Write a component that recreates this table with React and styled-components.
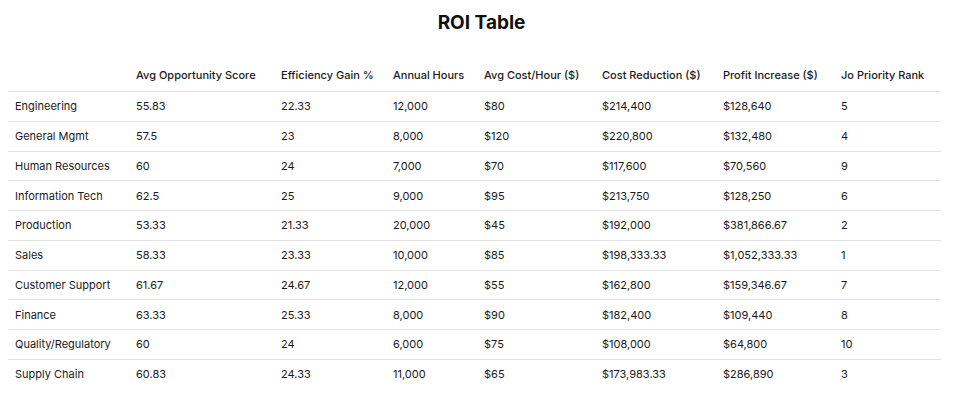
import styled, { createGlobalStyle } from "styled-components";

const GlobalStyle = createGlobalStyle`
  body {
    margin: 0;
    background: #ffffff;
    font-family: Inter, "Liberation Sans", Arial, sans-serif;
    color: #1a1a1a;
  }
`;

const Page = styled.div`
  width: 955px;
  padding: 10px 14px 0 8px;
  box-sizing: border-box;
`;

const Title = styled.h2`
  margin: 0 0 22px;
  text-align: center;
  font-size: 19px;
  font-weight: 700;
  line-height: 26px;
  color: #111;
  padding-left: 14px;
`;

const Table = styled.table`
  width: 933px;
  border-collapse: collapse;
  table-layout: fixed;
  font-size: 11px;
`;

const HeadCell = styled.th`
  text-align: left;
  font-weight: 500;
  padding: 0 7px;
  height: 33px;
  vertical-align: middle;
  border-bottom: 1px solid #e3e3e3;
  white-space: nowrap;
`;

const Row = styled.tr`
  border-bottom: ${(p) => (p.$last ? "none" : "1px solid #e3e3e3")};
`;

const Cell = styled.td`
  padding: 0 7px;
  height: 28.75px;
  vertical-align: middle;
  white-space: nowrap;
`;

const widths = [121, 145, 112, 91, 118, 121, 118, 107];

const headers = [
  "",
  "Avg Opportunity Score",
  "Efficiency Gain %",
  "Annual Hours",
  "Avg Cost/Hour ($)",
  "Cost Reduction ($)",
  "Profit Increase ($)",
  "Jo Priority Rank",
];

const rows = [
  ["Engineering", "55.83", "22.33", "12,000", "$80", "$214,400", "$128,640", "5"],
  ["General Mgmt", "57.5", "23", "8,000", "$120", "$220,800", "$132,480", "4"],
  ["Human Resources", "60", "24", "7,000", "$70", "$117,600", "$70,560", "9"],
  ["Information Tech", "62.5", "25", "9,000", "$95", "$213,750", "$128,250", "6"],
  ["Production", "53.33", "21.33", "20,000", "$45", "$192,000", "$381,866.67", "2"],
  ["Sales", "58.33", "23.33", "10,000", "$85", "$198,333.33", "$1,052,333.33", "1"],
  ["Customer Support", "61.67", "24.67", "12,000", "$55", "$162,800", "$159,346.67", "7"],
  ["Finance", "63.33", "25.33", "8,000", "$90", "$182,400", "$109,440", "8"],
  ["Quality/Regulatory", "60", "24", "6,000", "$75", "$108,000", "$64,800", "10"],
  ["Supply Chain", "60.83", "24.33", "11,000", "$65", "$173,983.33", "$286,890", "3"],
];

export default function App() {
  return (
    <Page>
      <GlobalStyle />
      <Title>ROI Table</Title>
      <Table>
        <colgroup>
          {widths.map((w, i) => (
            <col key={i} style={{ width: w }} />
          ))}
        </colgroup>
        <thead>
          <tr>
            {headers.map((h, i) => (
              <HeadCell key={i}>{h}</HeadCell>
            ))}
          </tr>
        </thead>
        <tbody>
          {rows.map((r, i) => (
            <Row key={r[0]} $last={i === rows.length - 1}>
              {r.map((c, j) => (
                <Cell key={j}>{c}</Cell>
              ))}
            </Row>
          ))}
        </tbody>
      </Table>
    </Page>
  );
}
